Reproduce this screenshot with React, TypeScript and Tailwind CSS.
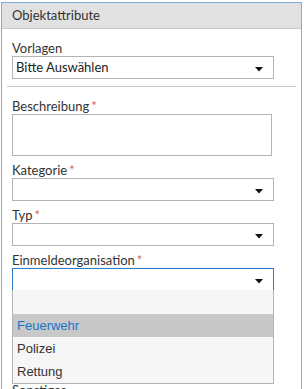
import React from 'react';

const labelFont = { fontFamily: '"Segoe UI", Lato, "Noto Sans", sans-serif' };

function Label({ text, required }: { text: string; required?: boolean }) {
  return (
    <div className="h-[15px] text-[13px] leading-[15px] text-[#333]" style={labelFont}>
      {text}
      {required && <span className="ml-[2px] text-[#e0605a]">*</span>}
    </div>
  );
}

function Arrow() {
  return (
    <svg width="8" height="5" viewBox="0 0 8 5" className="absolute right-[10px] top-[10px]">
      <path d="M0 0 H8 L4 4.5 Z" fill="#111" />
    </svg>
  );
}

function Select({ value, focused }: { value?: string; focused?: boolean }) {
  return (
    <div
      className={`relative h-[23px] w-[262px] border bg-white pl-[3px] text-[13px] leading-[21px] text-[#222] ${
        focused ? 'border-[#2f78c4]' : 'border-[#b4b4b4]'
      }`}
      style={labelFont}
    >
      {value}
      <Arrow />
    </div>
  );
}

const options = ['', 'Feuerwehr', 'Polizei', 'Rettung'];

export default function App() {
  return (
    <div className="h-[389px] w-[304px] overflow-hidden bg-white pt-[2px] pl-[1px]">
      <div className="flex h-[400px] w-[301px] flex-col border-x-[1.5px] border-t border-[#7eaed6] bg-white">
        <div
          className="h-[26px] border-b border-[#c8c8c8] bg-[#e1e1e1] pl-[10px] pt-[4px] text-[13px] leading-[16px] text-[#333]"
          style={labelFont}
        >
          Objektattribute
        </div>
        <div className="px-[10px] pt-[12px]">
          <Label text="Vorlagen" />
          <Select value="Bitte Auswählen" />
        </div>
        <div className="mx-[5px] mt-[7px] h-px bg-[#c8c8c8]" />
        <div className="flex flex-col gap-[7px] px-[10px] pt-[12px]">
          <div>
            <Label text="Beschreibung" required />
            <div className="h-[42px] w-[260px] border border-[#b4b4b4] bg-white" />
          </div>
          <div>
            <Label text="Kategorie" required />
            <Select />
          </div>
          <div>
            <Label text="Typ" required />
            <Select />
          </div>
          <div className="relative">
            <Label text="Einmeldeorganisation" required />
            <Select focused />
            <div
              className="absolute left-0 top-[37px] z-10 w-[262px] border border-t-0 border-[#b4b4b4] bg-[#f6f6f6]"
              style={{ fontFamily: '"Liberation Sans", Arial, sans-serif' }}
            >
              {options.map((o, i) => (
                <div
                  key={o || 'empty'}
                  className={`pl-[4px] text-[13px] ${i === 0 ? 'h-[24px] leading-[24px]' : 'h-[23px] leading-[23px]'} ${
                    o === 'Feuerwehr' ? 'bg-[#c8c8c8] text-[#1a73c8]' : 'text-[#333]'
                  }`}
                >
                  {o}
                </div>
              ))}
            </div>
          </div>
          <div>
            <Label text="Adresse" />
            <div className="h-[63px] w-[260px] border border-[#b4b4b4] bg-white" />
          </div>
          <div>
            <Label text="Sonstiges" />
          </div>
        </div>
      </div>
    </div>
  );
}
